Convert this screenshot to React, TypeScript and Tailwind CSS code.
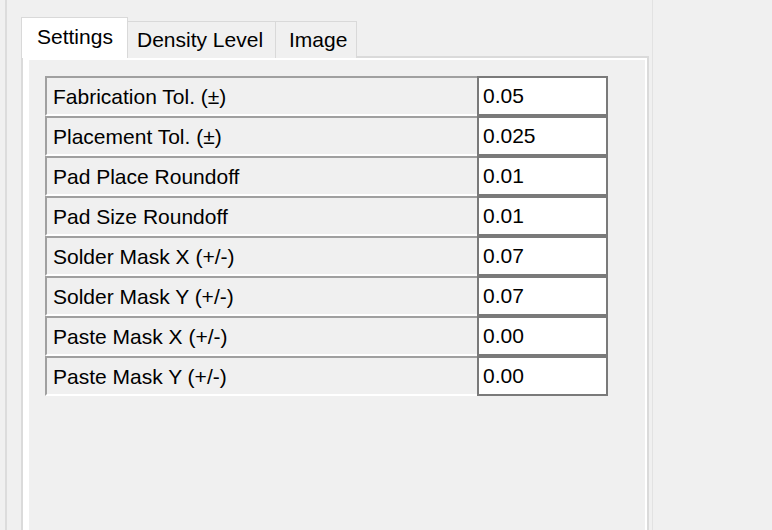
const rows = [
  { label: "Fabrication Tol. (±)", value: "0.05" },
  { label: "Placement Tol. (±)", value: "0.025" },
  { label: "Pad Place Roundoff", value: "0.01" },
  { label: "Pad Size Roundoff", value: "0.01" },
  { label: "Solder Mask X (+/-)", value: "0.07" },
  { label: "Solder Mask Y (+/-)", value: "0.07" },
  { label: "Paste Mask X (+/-)", value: "0.00" },
  { label: "Paste Mask Y (+/-)", value: "0.00" },
];

export default function App() {
  return (
    <div className="flex h-[530px] w-[772px] overflow-hidden bg-[#f0f0f0] font-['Liberation_Sans',Arial,sans-serif] text-[21px] leading-none text-black">
      <div className="ml-[5px] w-[2px] shrink-0 bg-[#dcdcdc]" />
      <div className="ml-[14px] flex w-[628px] shrink-0 flex-col pt-[17px]">
        {/* tab strip */}
        <div className="relative z-10 -mb-[2px] flex items-end">
          <div className="flex h-[41px] w-[107px] items-center border-x border-t border-[#d9d9d9] bg-white pl-[15px] pb-[3px]">
            Settings
          </div>
          <div className="flex h-[37px] w-[148px] items-center border-r border-t border-[#d9d9d9] bg-[#f0f0f0] pl-[9px] pb-[2px]">
            Density Level
          </div>
          <div className="flex h-[37px] w-[81px] items-center border-r border-t border-[#d9d9d9] bg-[#f0f0f0] pl-[13px] pb-[2px]">
            Image
          </div>
        </div>
        {/* tab page */}
        <div className="flex flex-1 border-x-2 border-t-2 border-[#dadada] bg-white pl-[6px] pr-[2px] pt-[2px]">
          <div className="flex-1 bg-[#f0f0f0] pl-[16px] pt-[16px]">
            <div className="flex flex-col">
              {rows.map((r) => (
                <div key={r.label} className="flex h-[40px]">
                  <div className="flex w-[432px] items-center border-l-2 border-t-2 border-b-2 border-l-[#a0a0a0] border-t-[#a0a0a0] border-b-white pl-[6px] pt-[1px]">
                    {r.label}
                  </div>
                  <div className="flex w-[131px] items-center border-2 border-[#7a7a7a] bg-white pl-[4px] pb-[1px]">
                    {r.value}
                  </div>
                </div>
              ))}
            </div>
          </div>
        </div>
      </div>
      <div className="ml-[3px] w-px shrink-0 bg-[#e2e2e2]" />
    </div>
  );
}
